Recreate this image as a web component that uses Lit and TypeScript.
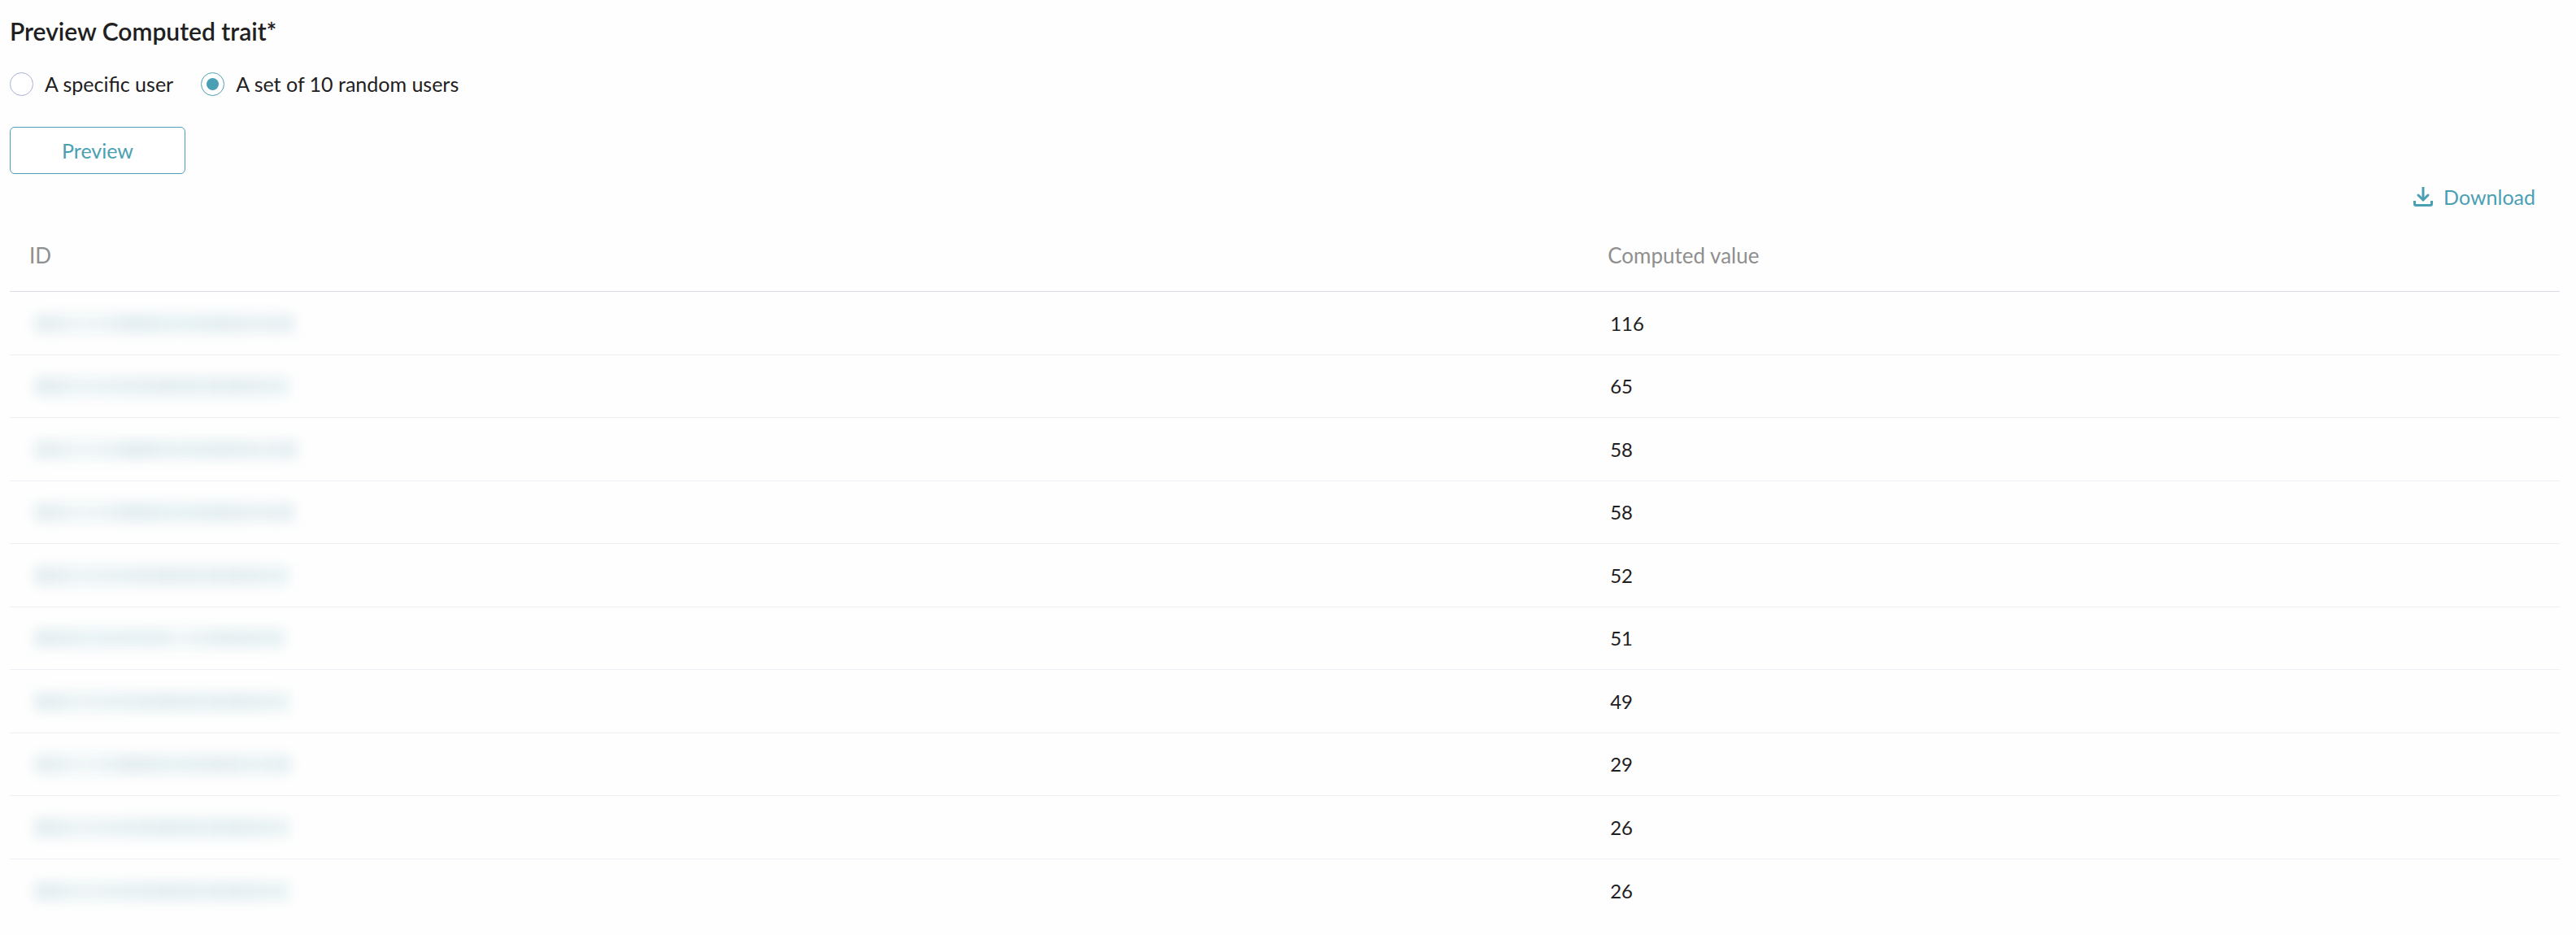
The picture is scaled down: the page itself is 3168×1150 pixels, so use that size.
import { LitElement, html, css } from "lit";
import { customElement, state } from "lit/decorators.js";

interface TraitRow {
  value: number;
  /** Width of the redacted identifier, in pixels. */
  mask: number;
  tone: "a" | "b" | "c";
}

const ROWS: TraitRow[] = [
  { value: 116, mask: 320, tone: "a" },
  { value: 65, mask: 314, tone: "b" },
  { value: 58, mask: 324, tone: "a" },
  { value: 58, mask: 320, tone: "a" },
  { value: 52, mask: 314, tone: "b" },
  { value: 51, mask: 308, tone: "c" },
  { value: 49, mask: 314, tone: "b" },
  { value: 29, mask: 316, tone: "a" },
  { value: 26, mask: 314, tone: "b" },
  { value: 26, mask: 314, tone: "b" },
];

@customElement("app-root")
export class AppRoot extends LitElement {
  @state() private mode: "specific" | "random" = "random";

  static styles = css`
    :host {
      --teal: #4aa0b3;
      --ink: #1f2021;
      --muted: #8f8f8f;
      display: block;
      box-sizing: border-box;
      min-height: 100vh;
      padding: 20px 20px 16px 12px;
      background: #fefefe;
      color: var(--ink);
      font-family: Lato, "Liberation Sans", sans-serif;
      font-size: 25px;
      line-height: 30px;
    }
    .title {
      margin: 0;
      font-size: 30px;
      line-height: 36px;
      font-weight: 600;
    }
    .choices {
      display: flex;
      gap: 34px;
      margin: 32px 0 38px;
      padding: 0;
      border: 0;
    }
    .choice {
      display: flex;
      align-items: center;
      gap: 14px;
      cursor: pointer;
    }
    .radio {
      appearance: none;
      display: grid;
      place-content: center;
      box-sizing: border-box;
      flex: none;
      width: 29px;
      height: 29px;
      margin: 0;
      border: 1px solid #a9b1d6;
      border-radius: 50%;
      background: #fff;
    }
    .radio:checked {
      border-color: var(--teal);
    }
    .radio:checked::before {
      content: "";
      width: 15px;
      height: 15px;
      border-radius: 50%;
      background: var(--teal);
    }
    .preview {
      display: block;
      box-sizing: border-box;
      min-width: 216px;
      height: 58px;
      padding: 0 24px;
      border: 1px solid var(--teal);
      border-radius: 6px;
      background: #fff;
      color: var(--teal);
      font: inherit;
      cursor: pointer;
    }
    .actions {
      display: flex;
      justify-content: flex-end;
      height: 56px;
      padding-right: 30px;
    }
    .download {
      display: flex;
      align-items: center;
      gap: 13px;
      padding: 0;
      border: 0;
      background: none;
      color: var(--teal);
      font: inherit;
      cursor: pointer;
    }
    .icon {
      display: block;
      width: 24px;
      height: 24px;
    }
    .results {
      width: 100%;
      border-collapse: separate;
      border-spacing: 0;
      table-layout: fixed;
    }
    .col-id {
      width: 61.9%;
    }
    .results th,
    .results td {
      box-sizing: border-box;
      padding: 0 24px;
      text-align: left;
      vertical-align: middle;
      border-bottom: 1px solid #eceff4;
    }
    .results th {
      height: 89px;
      border-color: #d9dde9;
      color: var(--muted);
      font-size: 26px;
      font-weight: 400;
    }
    .results td {
      height: 78px;
      font-size: 24px;
    }
    .results tr:nth-child(even) td {
      height: 77px;
    }
    .results tr:last-child td {
      border-bottom: 0;
    }
    .results .value {
      padding-left: 27px;
    }
    .mask {
      display: block;
      height: 24px;
      margin-left: 6px;
      filter: blur(7px);
    }
    .mask.a {
      background: linear-gradient(90deg, #e7f0f2 8%, #eff6f7 16%, #edf5f6 26%, #e3edf0 38%, #e9f3f4 54%, #e5eff1 72%, #eaf2f4 86%, #e7f0f3);
    }
    .mask.b {
      background: linear-gradient(90deg, #e5eff1 8%, #edf5f6 18%, #e9f2f4 32%, #e5eff1 52%, #e7f1f3 66%, #e5eff1 80%, #ebf4f5);
    }
    .mask.c {
      background: linear-gradient(90deg, #e5eff1 8%, #eaf3f5 20%, #e7f1f3 50%, #f0f7f7 58%, #e5eff1 76%, #e9f3f4);
    }
  `;

  render() {
    return html`
      <h2 class="title" id="title">Preview Computed trait*</h2>
      <fieldset class="choices" aria-labelledby="title">
        ${this.choice("specific", "A specific user")}
        ${this.choice("random", "A set of 10 random users")}
      </fieldset>
      <button class="preview" type="button">Preview</button>
      <div class="actions">
        <button class="download" type="button">
          <svg class="icon" viewBox="0 0 24 24" fill="none" stroke="currentColor" stroke-width="3" aria-hidden="true">
            <path d="M12 0V16" />
            <path d="M6 10L12 16L18 10" stroke-linecap="round" />
            <path d="M1.5 17V21Q1.5 22.5 3 22.5H21Q22.5 22.5 22.5 21V17" />
          </svg>
          Download
        </button>
      </div>
      <table class="results">
        <colgroup>
          <col class="col-id" />
          <col />
        </colgroup>
        <thead>
          <tr>
            <th scope="col">ID</th>
            <th scope="col">Computed value</th>
          </tr>
        </thead>
        <tbody>
          ${ROWS.map(
            (row) => html`<tr>
              <td><span class="mask ${row.tone}" style="width:${row.mask}px"></span></td>
              <td class="value">${row.value}</td>
            </tr>`
          )}
        </tbody>
      </table>
    `;
  }

  private choice(value: "specific" | "random", label: string) {
    return html`<label class="choice">
      <input
        class="radio"
        type="radio"
        name="mode"
        .checked=${this.mode === value}
        @change=${() => (this.mode = value)}
      />
      ${label}
    </label>`;
  }
}
